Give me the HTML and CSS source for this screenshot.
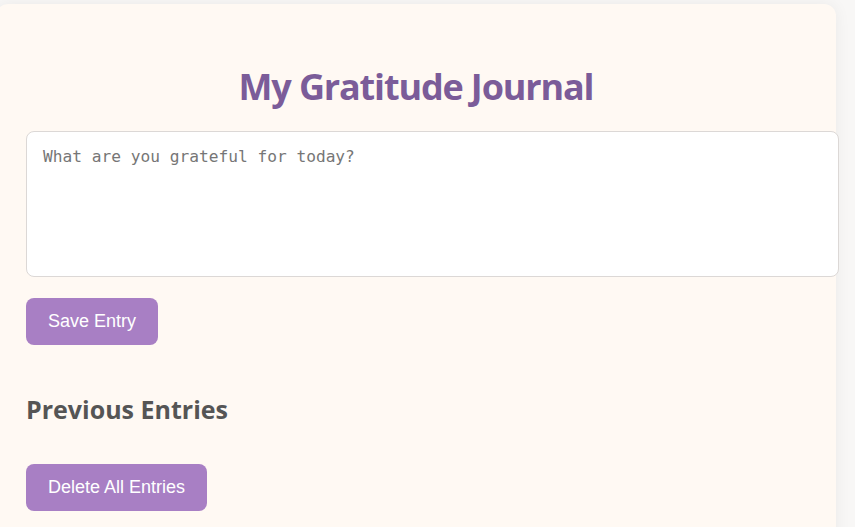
FILE: index.html
```html
<!DOCTYPE html>
<html lang="en">
<head>
<meta charset="utf-8">
<title>My Gratitude Journal</title>
<link rel="stylesheet" href="styles.css">
</head>
<body>
<main class="journal">
  <h1 class="journal-title">My Gratitude Journal</h1>
  <textarea class="entry-input" placeholder="What are you grateful for today?"></textarea>
  <button class="btn save-btn" type="button">Save Entry</button>
  <h2 class="entries-title">Previous Entries</h2>
  <div class="entries-list"></div>
  <button class="btn delete-btn" type="button">Delete All Entries</button>
</main>
</body>
</html>
```
FILE: styles.css
```css
html, body {
  margin: 0;
  padding: 0;
  height: 100%;
  overflow: hidden;
}
body {
  background: #f8f7f6;
  font-family: "Open Sans", "Noto Sans", sans-serif;
}
.journal {
  margin: 4px 19px 0 -4px;
  padding: 30px;
  background: #fff9f3;
  border-radius: 12px;
  box-shadow: 0 0 16px rgba(0, 0, 0, 0.06);
  min-height: 600px;
  display: flex;
  flex-direction: column;
  align-items: flex-start;
}
.journal-title {
  align-self: stretch;
  text-align: center;
  color: #7b5c99;
  font-size: 36px;
  font-weight: 700;
  line-height: 48px;
  margin: 29px 0 20px;
  letter-spacing: -1.15px;
}
.entry-input {
  width: 780px;
  height: 114px;
  padding: 15px 15px 15px 16px;
  border: 1px solid #dcd8d6;
  border-radius: 8px;
  background: #fff;
  font-family: "DejaVu Sans Mono", monospace;
  font-size: 16.2px;
  resize: none;
  margin: 0;
}
.entry-input::placeholder {
  color: #767676;
}
.btn {
  background: #a87fc4;
  color: #fff;
  border: none;
  border-radius: 8px;
  font-family: "Liberation Sans", Arial, sans-serif;
  font-size: 18px;
  line-height: 21px;
  padding: 13px 22px;
  cursor: pointer;
}
.save-btn {
  margin-top: 21px;
}
.entries-title {
  color: #555;
  font-size: 25px;
  font-weight: 700;
  line-height: 32px;
  margin: 48px 0 0;
}
.entries-list {
  min-height: 0;
}
.delete-btn {
  margin-top: 39px;
}
```
